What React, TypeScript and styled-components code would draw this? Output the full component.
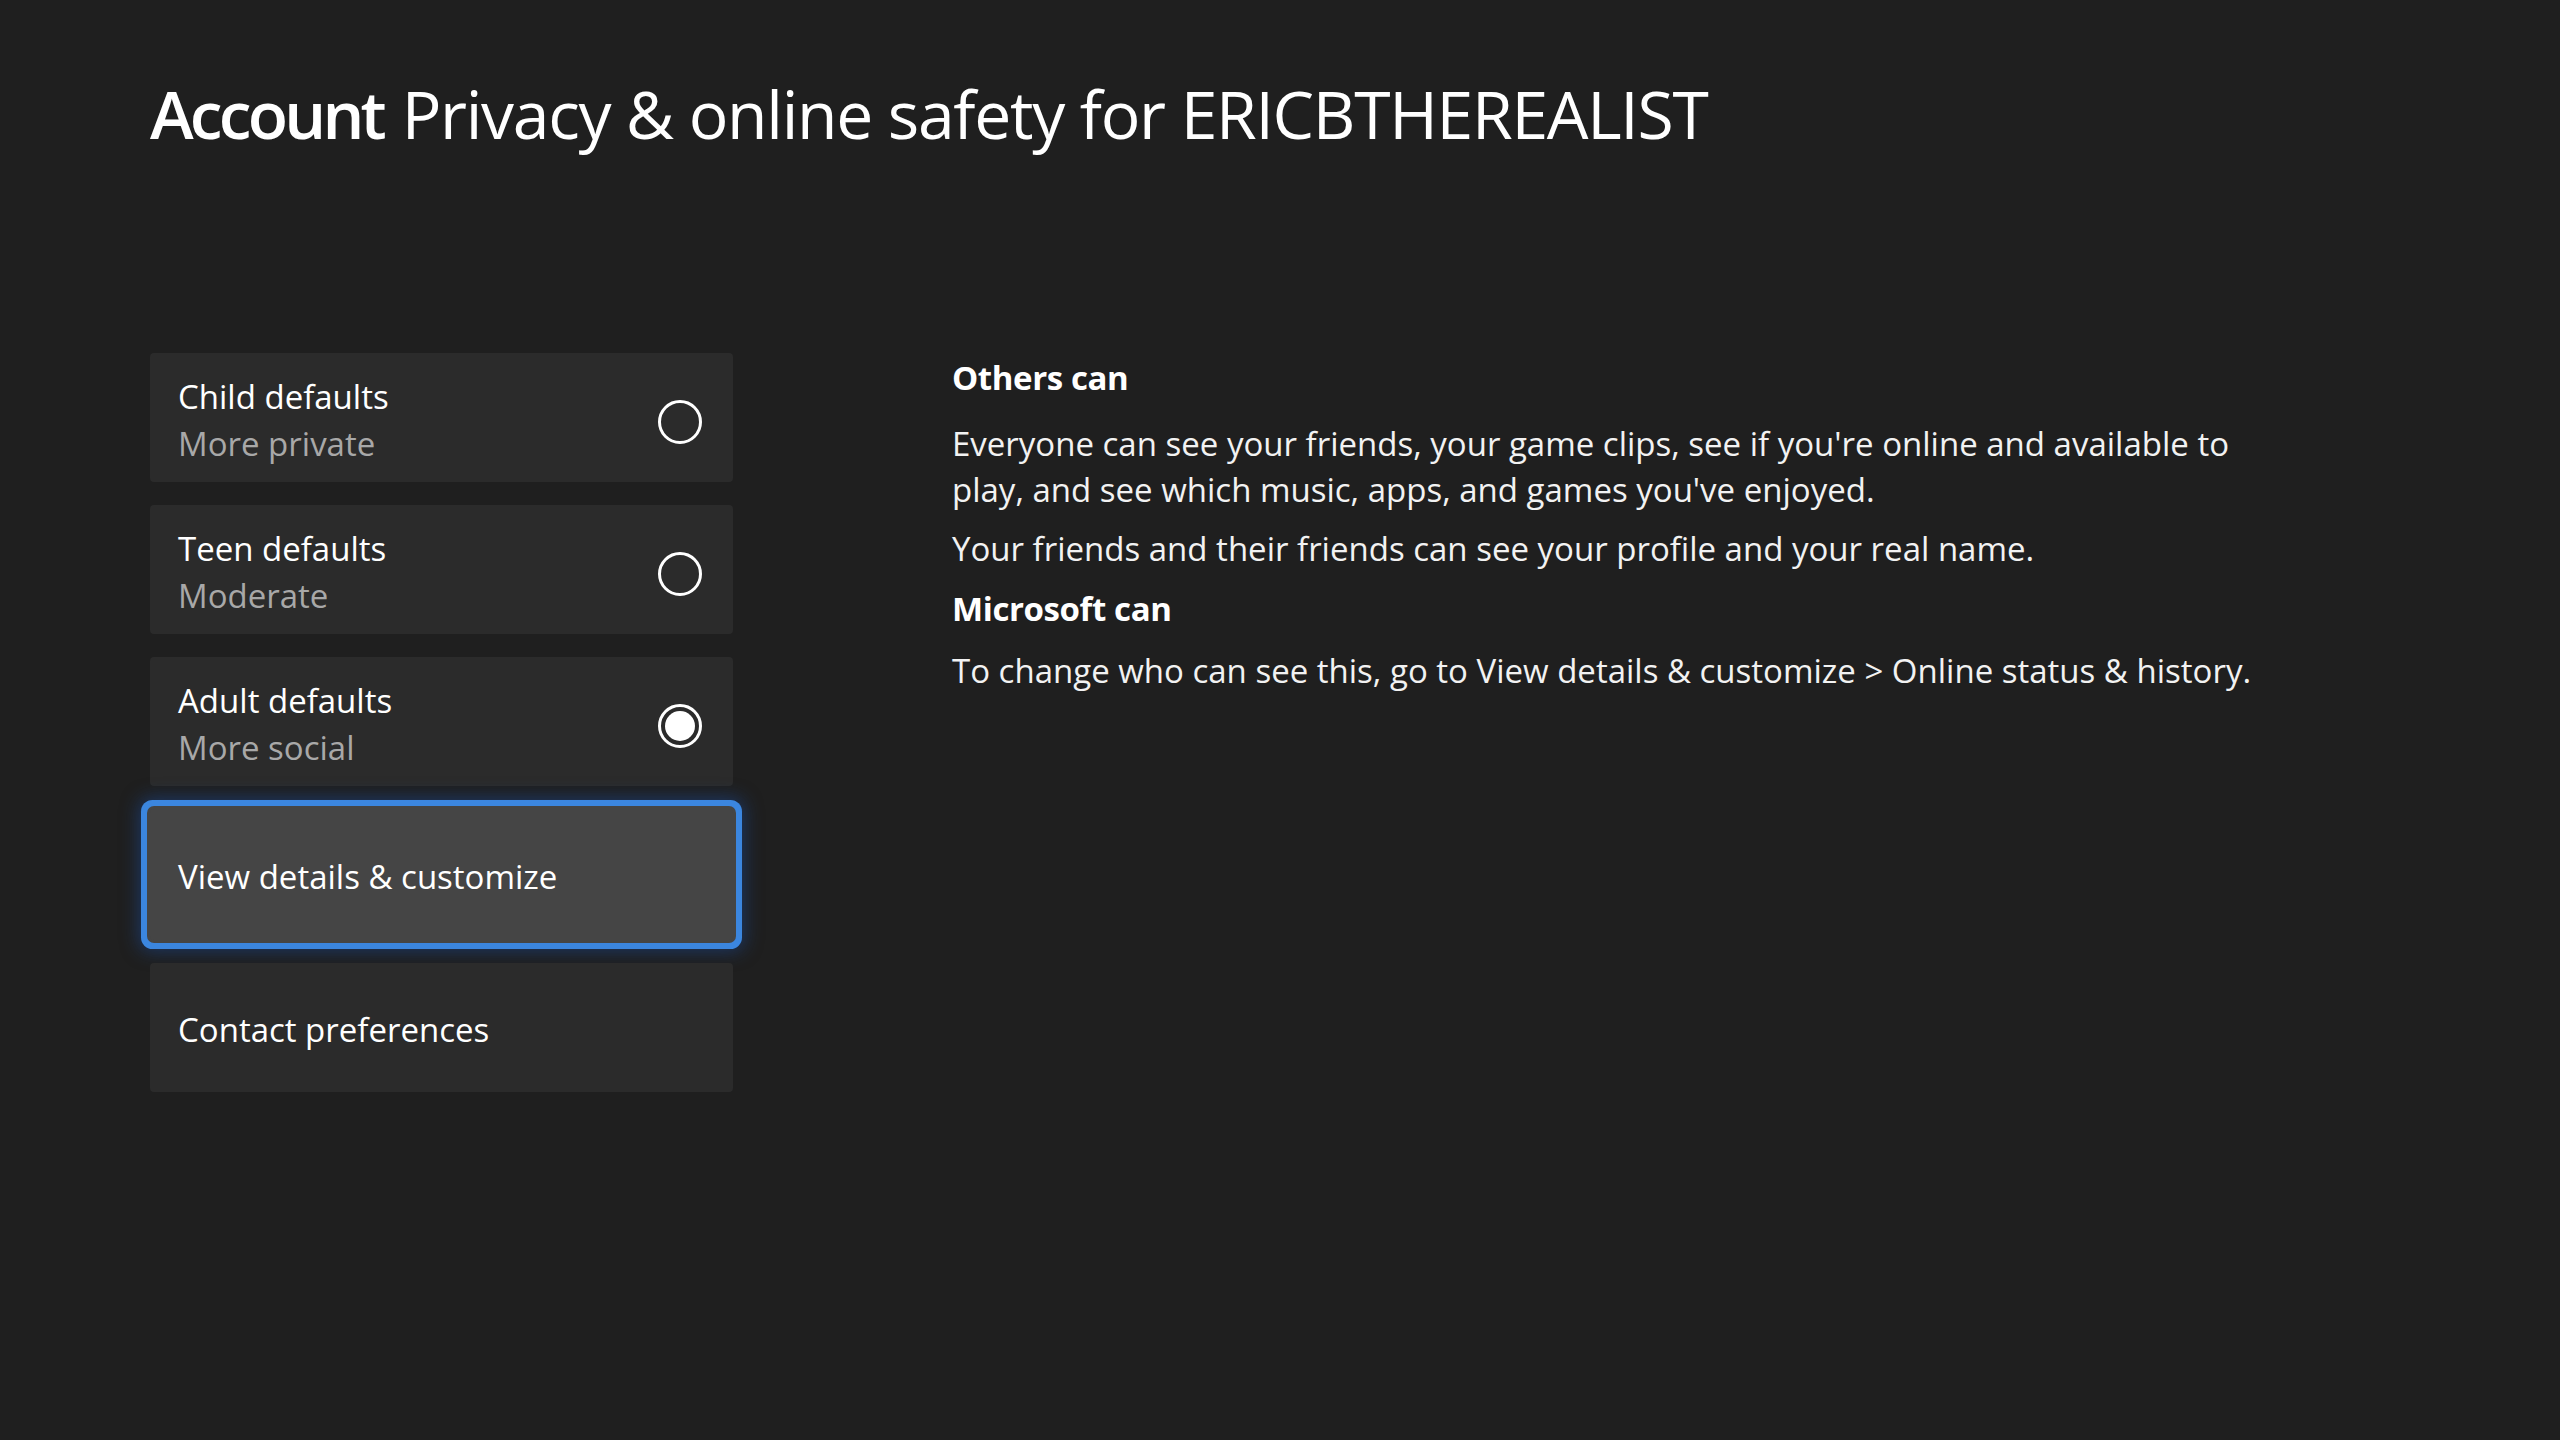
import styled, { createGlobalStyle } from "styled-components";

const GlobalStyle = createGlobalStyle`
  html, body {
    margin: 0;
    padding: 0;
    background-color: #1f1f1f;
  }

  body {
    font-family: "Open Sans", "Noto Sans", sans-serif;
    color: #ffffff;
  }
`;

type Option = {
  title: string;
  sub: string;
  selected: boolean;
};

const options: Option[] = [
  { title: "Child defaults", sub: "More private", selected: false },
  { title: "Teen defaults", sub: "Moderate", selected: false },
  { title: "Adult defaults", sub: "More social", selected: true },
];

export default function App() {
  return (
    <Page>
      <GlobalStyle />
      <Title>
        <strong>Account</strong> Privacy &amp; online safety for ERICBTHEREALIST
      </Title>

      <Content>
        <Menu>
          {options.map((option) => (
            <Card key={option.title} type="button">
              <CardText>
                <CardTitle>{option.title}</CardTitle>
                <CardSub>{option.sub}</CardSub>
              </CardText>
              <Radio $selected={option.selected} />
            </Card>
          ))}
          <Card type="button" $focused>
            <CardTitle>View details &amp; customize</CardTitle>
          </Card>
          <Card type="button">
            <CardTitle>Contact preferences</CardTitle>
          </Card>
        </Menu>

        <Details>
          <Heading>Others can</Heading>
          <Paragraph>
            Everyone can see your friends, your game clips, see if you're online and available to
            play, and see which music, apps, and games you've enjoyed.
          </Paragraph>
          <Paragraph>Your friends and their friends can see your profile and your real name.</Paragraph>
          <Heading $spaced>Microsoft can</Heading>
          <Paragraph>
            To change who can see this, go to View details &amp; customize &gt; Online status &amp; history.
          </Paragraph>
        </Details>
      </Content>
    </Page>
  );
}

const Page = styled.div`
  box-sizing: border-box;
  min-height: 1440px;
  padding: 80px 0 0 150px;
`;

const Title = styled.h1`
  margin: 0;
  font-size: 66px;
  line-height: 66px;
  font-weight: 400;
  letter-spacing: -1.3px;
  white-space: nowrap;

  strong {
    font-weight: 600;
    letter-spacing: -3.8px;
    margin-right: 3px;
  }
`;

const Content = styled.div`
  display: flex;
  gap: 219px;
  margin-top: 207px;
`;

const Menu = styled.div`
  display: flex;
  flex-direction: column;
  gap: 23px;
  width: 583px;
  flex-shrink: 0;
`;

const Card = styled.button<{ $focused?: boolean }>`
  display: flex;
  align-items: center;
  justify-content: space-between;
  box-sizing: border-box;
  height: ${({ $focused }) => ($focused ? "131px" : "129px")};
  padding: 4px 31px 0 28px;
  border: none;
  border-radius: 4px;
  font-family: inherit;
  text-align: left;
  color: #ffffff;
  background-color: ${({ $focused }) => ($focused ? "#454545" : "#2b2b2b")};
  box-shadow: ${({ $focused }) =>
    $focused
      ? "0 0 0 3px #454545, 0 0 0 9px #3b86df, 0 0 18px 11px rgba(25, 80, 170, 0.5)"
      : "none"};
  cursor: pointer;
`;

const CardText = styled.div`
  display: flex;
  flex-direction: column;
`;

const CardTitle = styled.span`
  font-size: 33px;
  line-height: 47px;
  color: #ffffff;
`;

const CardSub = styled.span`
  font-size: 33px;
  line-height: 47px;
  color: #a8a8a8;
`;

const Radio = styled.span<{ $selected: boolean }>`
  position: relative;
  box-sizing: border-box;
  width: 44px;
  height: 44px;
  margin-top: 4px;
  border: 3px solid #ffffff;
  border-radius: 50%;
  flex-shrink: 0;

  &::after {
    content: "";
    display: ${({ $selected }) => ($selected ? "block" : "none")};
    position: absolute;
    inset: 4px;
    border-radius: 50%;
    background-color: #ffffff;
  }
`;

const Details = styled.div`
  width: 1330px;
  padding-top: 1px;
`;

const Heading = styled.h2<{ $spaced?: boolean }>`
  margin: ${({ $spaced }) => ($spaced ? "13px 0 16px" : "0 0 20px")};
  font-size: 33px;
  line-height: 47px;
  font-weight: 700;
  letter-spacing: -0.4px;
`;

const Paragraph = styled.p`
  margin: 0 0 13px;
  font-size: 33px;
  line-height: 46px;
  color: #f2f2f2;
`;
